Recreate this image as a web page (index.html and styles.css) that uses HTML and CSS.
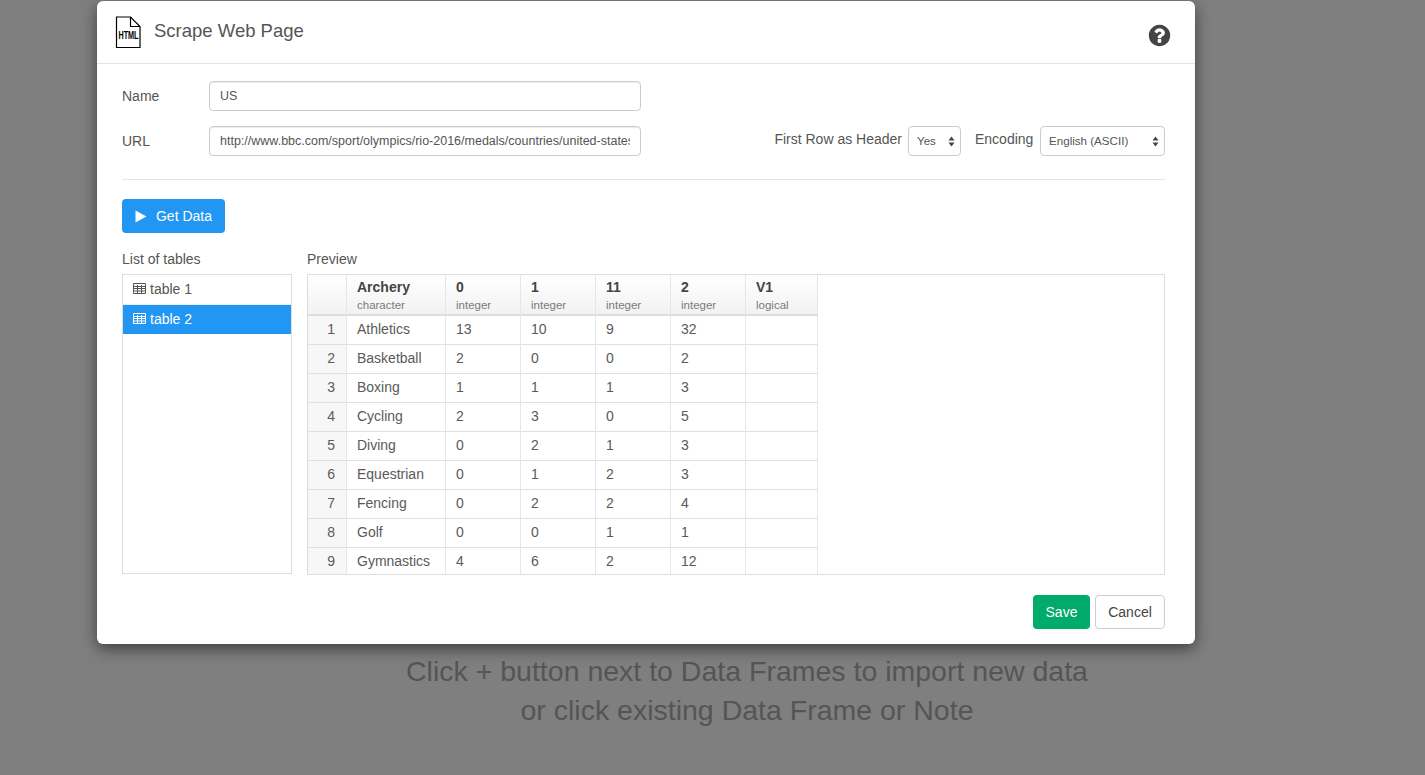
FILE: index.html
```html
<!DOCTYPE html>
<html lang="en">
<head>
<meta charset="utf-8">
<title>Scrape Web Page</title>
<link rel="stylesheet" href="styles.css">
</head>
<body>
<main class="page">
  <p class="hint">Click + button next to Data Frames to import new data<br>or click existing Data Frame or Note</p>
</main>
<section class="modal">
  <header class="modal-header">
    <svg class="file-icon" width="26" height="33" viewBox="0 0 26 33">
      <path d="M1.500 1H15.500L25 10.500V31.500H1.500Z M15.500 1V10.500H25" fill="#fff" stroke="#000" stroke-width="1.200"/>
      <text x="5" y="23.500" transform="scale(.69 1)" class="file-icon-text">HTML</text>
    </svg>
    <h1 class="modal-title">Scrape Web Page</h1>
    <svg class="help-icon" width="25" height="25" viewBox="0 0 1792 1792"><path fill="#444" d="M1024 1376v-192q0-14-9-23t-23-9h-192q-14 0-23 9t-9 23v192q0 14 9 23t23 9h192q14 0 23-9t9-23zm256-672q0-88-55.500-163t-138.500-116-170-41q-243 0-371 213-15 24 8 42l132 100q7 6 19 6 16 0 25-12 53-68 86-92 34-24 86-24 48 0 85.500 26t37.500 59q0 38-20 61t-68 45q-63 28-115.500 86.500t-52.500 125.500v36q0 14 9 23t23 9h192q14 0 23-9t9-23q0-19 21.500-49.500t54.500-49.500q32-18 49-28.500t46-35 44.500-48 28-60.500 12.500-81zm384 192q0 209-103 385.500t-279.500 279.500-385.500 103-385.500-103-279.500-279.500-103-385.500 103-385.500 279.500-279.500 385.500-103 385.500 103 279.500 279.500 103 385.500z"/></svg>
  </header>
  <div class="modal-body">
    <div class="form-row name-row">
      <label class="field-label">Name</label>
      <input class="text-input" type="text" value="US">
    </div>
    <div class="form-row url-row">
      <label class="field-label">URL</label>
      <input class="text-input" type="text" value="http://www.bbc.com/sport/olympics/rio-2016/medals/countries/united-states">
      <div class="options">
        <span class="option-label">First Row as Header</span>
        <div class="select select-yes">Yes<svg class="updown" width="7" height="11" viewBox="0 0 7 11"><path d="M3.500 0.500L6.500 4.500H0.500ZM3.500 10.500L0.500 6.500H6.500Z" fill="#444"/></svg></div>
        <span class="option-label encoding-label">Encoding</span>
        <div class="select select-enc">English (ASCII)<svg class="updown" width="7" height="11" viewBox="0 0 7 11"><path d="M3.500 0.500L6.500 4.500H0.500ZM3.500 10.500L0.500 6.500H6.500Z" fill="#444"/></svg></div>
      </div>
    </div>
    <hr class="divider">
    <button class="btn btn-primary get-data" type="button"><svg class="play" width="12" height="13" viewBox="0 0 12 13"><path d="M0.500 0.500L11.500 6.500L0.500 12.500Z" fill="#fff"/></svg>Get Data</button>
    <div class="panes">
      <div class="pane-list">
        <div class="pane-title">List of tables</div>
        <ul class="table-list">
          <li class="table-item"><svg class="th-icon" width="13" height="11" viewBox="0 0 13 11"><path d="M0.500 0.500H12.500V10.500H0.500ZM0.500 3.500H12.500M0.500 5.500H12.500M0.500 8H12.500M4.500 2V10.500M8.500 2V10.500" fill="none" stroke="currentColor"/></svg>table 1</li>
          <li class="table-item active"><svg class="th-icon" width="13" height="11" viewBox="0 0 13 11"><path d="M0.500 0.500H12.500V10.500H0.500ZM0.500 3.500H12.500M0.500 5.500H12.500M0.500 8H12.500M4.500 2V10.500M8.500 2V10.500" fill="none" stroke="currentColor"/></svg>table 2</li>
        </ul>
      </div>
      <div class="pane-preview">
        <div class="pane-title">Preview</div>
        <div class="grid-wrap">
          <table class="grid">
            <colgroup><col class="c-idx"><col class="c-name"><col class="c-num"><col class="c-num"><col class="c-num"><col class="c-num"><col class="c-v"></colgroup>
            <thead><tr>
              <th class="idx"></th>
              <th><b>Archery</b><small>character</small></th>
              <th><b>0</b><small>integer</small></th>
              <th><b>1</b><small>integer</small></th>
              <th><b>11</b><small>integer</small></th>
              <th><b>2</b><small>integer</small></th>
              <th><b>V1</b><small>logical</small></th>
            </tr></thead>
            <tbody>
              <tr><td class="idx">1</td><td>Athletics</td><td>13</td><td>10</td><td>9</td><td>32</td><td></td></tr>
              <tr><td class="idx">2</td><td>Basketball</td><td>2</td><td>0</td><td>0</td><td>2</td><td></td></tr>
              <tr><td class="idx">3</td><td>Boxing</td><td>1</td><td>1</td><td>1</td><td>3</td><td></td></tr>
              <tr><td class="idx">4</td><td>Cycling</td><td>2</td><td>3</td><td>0</td><td>5</td><td></td></tr>
              <tr><td class="idx">5</td><td>Diving</td><td>0</td><td>2</td><td>1</td><td>3</td><td></td></tr>
              <tr><td class="idx">6</td><td>Equestrian</td><td>0</td><td>1</td><td>2</td><td>3</td><td></td></tr>
              <tr><td class="idx">7</td><td>Fencing</td><td>0</td><td>2</td><td>2</td><td>4</td><td></td></tr>
              <tr><td class="idx">8</td><td>Golf</td><td>0</td><td>0</td><td>1</td><td>1</td><td></td></tr>
              <tr><td class="idx">9</td><td>Gymnastics</td><td>4</td><td>6</td><td>2</td><td>12</td><td></td></tr>
            </tbody>
          </table>
        </div>
      </div>
    </div>
    <div class="actions">
      <button class="btn btn-save" type="button">Save</button>
      <button class="btn btn-cancel" type="button">Cancel</button>
    </div>
  </div>
</section>
</body>
</html>
```
FILE: styles.css
```css
* { box-sizing: border-box; }
html, body { margin: 0; height: 100%; }
body {
  background: #7f7f7f;
  font-family: "Liberation Sans", Arial, sans-serif;
  font-size: 14px;
  color: #555;
  overflow: hidden;
}
.page { height: 775px; padding-top: 652px; }
.hint {
  margin: 0 0 0 69px;
  text-align: center;
  font-size: 28.500px;
  line-height: 39px;
  color: #555;
}
.modal {
  position: absolute;
  left: 97px;
  top: 1px;
  width: 1098px;
  height: 643px;
  background: #fff;
  border-radius: 6px;
  box-shadow: 0 5px 15px rgba(0, 0, 0, .5);
}
.modal-header {
  height: 63px;
  border-bottom: 1px solid #e5e5e5;
  display: flex;
  align-items: flex-start;
  padding: 15px 23px 0 18px;
}
.file-icon { flex: none; }
.file-icon-text { font-size: 10.500px; font-weight: 700; fill: #000; }
.modal-title {
  margin: 3px 0 0 13px;
  font-size: 18.500px;
  font-weight: 400;
  line-height: 24px;
  color: #555;
  flex: 1;
}
.help-icon { margin-top: 7px; flex: none; }
.modal-body { padding: 17px 30px 0 25px; }
.form-row { display: flex; align-items: center; height: 30px; }
.url-row { margin-top: 15px; }
.field-label { width: 87px; font-size: 14px; color: #555; flex: none; }
.text-input {
  width: 432px;
  height: 30px;
  padding: 0 10px;
  border: 1px solid #ccc;
  border-radius: 4px;
  font: 12.500px "Liberation Sans", Arial, sans-serif;
  color: #555;
  background: #fff;
  box-shadow: inset 0 1px 1px rgba(0, 0, 0, .075);
}
.options { margin-left: auto; display: flex; align-items: center; }
.option-label { font-size: 14px; color: #555; margin-top: -4px; }
.encoding-label { margin-left: 14px; min-width: 59px; }
.select {
  height: 30px;
  margin-left: 6px;
  padding: 0 8px 2px;
  display: flex;
  align-items: center;
  justify-content: space-between;
  border: 1px solid #ccc;
  border-radius: 4px;
  font-size: 11.600px;
  color: #555;
  background: #fff;
}
.select-yes { width: 53px; }
.select-enc { width: 125px; }
.updown { flex: none; margin-right: -3px; margin-top: 2px; }
.divider { margin: 23px 0 19px; border: 0; border-top: 1px solid #e5e5e5; }
.btn {
  display: inline-flex;
  align-items: center;
  justify-content: center;
  border-radius: 4px;
  font: 14px "Liberation Sans", Arial, sans-serif;
  cursor: pointer;
}
.btn-primary {
  width: 103px;
  height: 34px;
  border: 0;
  background: #2196f3;
  color: #fff;
}
.play { margin-right: 9px; flex: none; }
.panes { display: flex; margin-top: 17px; }
.pane-list { width: 170px; flex: none; }
.pane-preview { width: 858px; margin-left: 15px; flex: none; }
.pane-title { height: 24px; line-height: 18px; font-size: 14px; color: #555; }
.table-list {
  margin: 0;
  padding: 0;
  height: 300px;
  list-style: none;
  border: 1px solid #ddd;
}
.table-item {
  height: 30px;
  padding: 0 0 2px 10px;
  display: flex;
  align-items: center;
  border-bottom: 1px solid #eee;
  font-size: 14px;
  color: #555;
}
.table-item.active { background: #2196f3; color: #fff; height: 29px; border-bottom: 0; }
.th-icon { margin-right: 4px; flex: none; }
.grid-wrap { height: 301px; border: 1px solid #ddd; overflow: hidden; }
.grid { border-collapse: separate; border-spacing: 0; table-layout: fixed; width: 510px; }
.c-idx { width: 39px; }
.c-name { width: 99px; }
.c-num { width: 75px; }
.c-v { width: 72px; }
.grid th, .grid td {
  padding: 0 0 0 10px;
  border-right: 1px solid #e6e6e6;
  border-bottom: 1px solid #e0e0e0;
  text-align: left;
  font-weight: 400;
  font-size: 14px;
  color: #5a5a5a;
}
.grid th {
  height: 41px;
  border-bottom: 2px solid #ddd;
  background: linear-gradient(#fff, #f2f2f2);
  vertical-align: top;
  padding-top: 4px;
}
.grid th b { display: block; font-size: 14px; line-height: 16px; font-weight: 700; color: #444; }
.grid th small { display: block; font-size: 11.500px; line-height: 15px; color: #7a7a7a; margin-top: 3px; }
.grid td { height: 29px; padding-bottom: 2px; }
.grid td.idx { background: #f7f7f7; text-align: right; padding: 0 11px 2px 0; }
.actions { display: flex; justify-content: flex-end; gap: 5px; margin-top: 20px; }
.btn-save { width: 57px; height: 34px; border: 0; background: #00ab6b; color: #fff; }
.btn-cancel { width: 70px; height: 34px; border: 1px solid #ccc; background: #fff; color: #444; }
```
